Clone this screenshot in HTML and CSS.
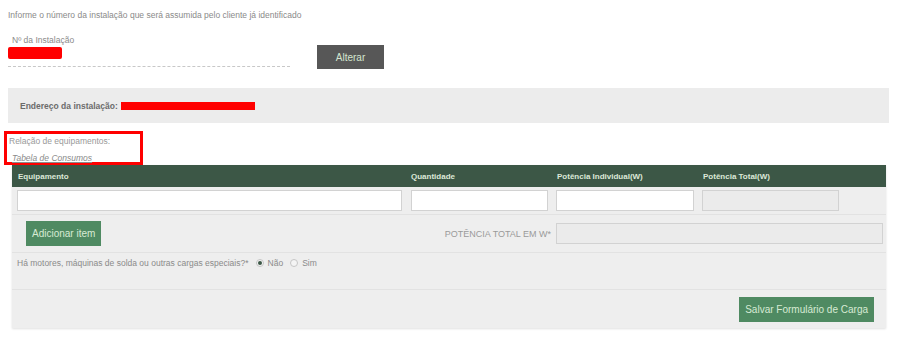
FILE: index.html
```html
<!DOCTYPE html>
<html>
<head>
    <title>Formulário de Carga</title>
    <link rel="stylesheet" href="styles.css">
</head>
<body>
    <div class="page">
        <p class="intro">Informe o número da instalação que será assumida pelo cliente já identificado</p>

        <div class="install-row">
            <div class="install-field">
                <div class="install-label">Nº da Instalação</div>
                <div class="install-value"><span class="redact small"></span></div>
            </div>
            <button class="btn-dark">Alterar</button>
        </div>

        <div class="address">
            <b>Endereço da instalação:</b> <span class="redact wide"></span>
        </div>

        <div class="equip-title">
            <div>Relação de equipamentos:</div>
            <div class="tabela">Tabela de Consumos</div>
        </div>

        <div class="panel">
            <div class="thead">
                <div>Equipamento</div>
                <div>Quantidade</div>
                <div>Potência Individual(W)</div>
                <div>Potência Total(W)</div>
            </div>
            <div class="row inputs">
                <input type="text" class="in-equip">
                <input type="text" class="in-small">
                <input type="text" class="in-small wider">
                <input type="text" class="in-small" disabled>
            </div>
            <div class="row add-row">
                <button class="btn-green">Adicionar item</button>
                <span class="total-label">POTÊNCIA TOTAL EM W*</span>
                <input type="text" class="in-total" disabled>
            </div>
            <div class="row question">
                <span>Há motores, máquinas de solda ou outras cargas especiais?*</span>
                <label class="radio"><span class="dot on"></span>Não</label>
                <label class="radio"><span class="dot"></span>Sim</label>
            </div>
            <div class="row footer">
                <button class="btn-green">Salvar Formulário de Carga</button>
            </div>
        </div>
    </div>
</body>
</html>
```

FILE: styles.css
```css
body {
    margin: 0;
    background: #fff;
    font-family: "Liberation Sans", Arial, sans-serif;
    color: #8a8a8a;
    font-size: 8.5px;
}
.page {
    width: 897px;
    height: 339px;
    overflow: hidden;
}
.intro {
    margin: 0;
    padding: 10px 0 0 8px;
    height: 15px;
    line-height: 11px;
}
.install-row {
    display: flex;
    align-items: flex-start;
    padding: 6px 0 0 8px;
}
.install-field {
    width: 282px;
    border-bottom: 1px dashed #c8c8c8;
    height: 35px;
}
.install-label {
    padding: 4px 0 0 4px;
    line-height: 11px;
}
.install-value {
    padding-top: 1px;
}
.redact {
    display: inline-block;
    background: #ff0000;
    vertical-align: middle;
}
.redact.small {
    width: 54px;
    height: 12px;
    border-radius: 2px;
}
.redact.wide {
    width: 134px;
    height: 8px;
    margin-left: 2px;
}
.btn-dark {
    margin: 14px 0 0 27px;
    width: 67px;
    height: 24px;
    background: #575757;
    color: #d4e6d0;
    border: none;
    font-family: inherit;
    font-size: 10px;
    padding: 0;
}
.address {
    margin: 19px 8px 0 8px;
    width: 869px;
    height: 35px;
    background: #ececec;
    padding-left: 12px;
    display: flex;
    align-items: center;
    color: #6b6b6b;
}
.address b {
    margin-right: 1px;
}
.equip-title {
    margin: 8px 0 0 4px;
    width: 131px;
    height: 28px;
    border: 3px solid #ff0000;
    padding: 0 0 0 2px;
    line-height: 10px;
    color: #999;
}
.equip-title div:first-child {
    padding-top: 2px;
}
.tabela {
    margin: 7px 0 0 3px;
    font-style: italic;
    text-decoration: underline;
    color: #8a8a8a;
}
.panel {
    margin: 0 0 0 12px;
    width: 874px;
    background: #eeeeee;
    box-shadow: 0 1px 2px rgba(0, 0, 0, 0.12);
}
.thead {
    display: grid;
    grid-template-columns: 393px 146px 146px 1fr;
    height: 22px;
    align-items: center;
    padding-left: 6px;
    background: #3c5746;
    color: #dce8d8;
    font-weight: bold;
    font-size: 8px;
}
.row {
    display: flex;
    align-items: center;
    border-bottom: 1px solid #e2e2e2;
}
.inputs {
    height: 27px;
    padding: 0 0 0 5px;
    gap: 8px;
}
input {
    height: 21px;
    box-sizing: border-box;
    border: 1px solid #d2d2d2;
    background: #fff;
    padding: 0;
    margin: 0;
}
input[disabled] {
    background: #ebebeb;
}
.in-equip {
    width: 385px;
    margin-right: 1px;
}
.in-small {
    width: 137px;
}
.in-small.wider {
    width: 138px;
}
.add-row {
    height: 37px;
    padding-left: 14px;
}
.btn-green {
    background: #4f8a62;
    color: #d7ead4;
    border: none;
    font-family: inherit;
    font-size: 10px;
    height: 25px;
    padding: 0 6px;
}
.total-label {
    margin-left: auto;
    margin-right: 5px;
    color: #9a9a9a;
    font-size: 9px;
}
.in-total {
    width: 327px;
    margin-right: 3px;
}
.question {
    height: 36px;
    padding-left: 5px;
    align-items: flex-start;
}
.question span,
.question label {
    margin-top: 5px;
}
.radio {
    display: flex;
    align-items: center;
    margin-left: 7px;
}
.dot {
    display: inline-block;
    width: 6px;
    height: 6px;
    border: 1px solid #c6c6c6;
    border-radius: 50%;
    background: #f4f4f4;
    margin: 0 4px 0 0 !important;
    position: relative;
}
.dot.on::after {
    content: "";
    position: absolute;
    left: 1px;
    top: 1px;
    width: 4px;
    height: 4px;
    border-radius: 50%;
    background: #3c5746;
}
.footer {
    height: 38px;
    justify-content: flex-end;
    padding-right: 12px;
    border-bottom: none;
}
```
